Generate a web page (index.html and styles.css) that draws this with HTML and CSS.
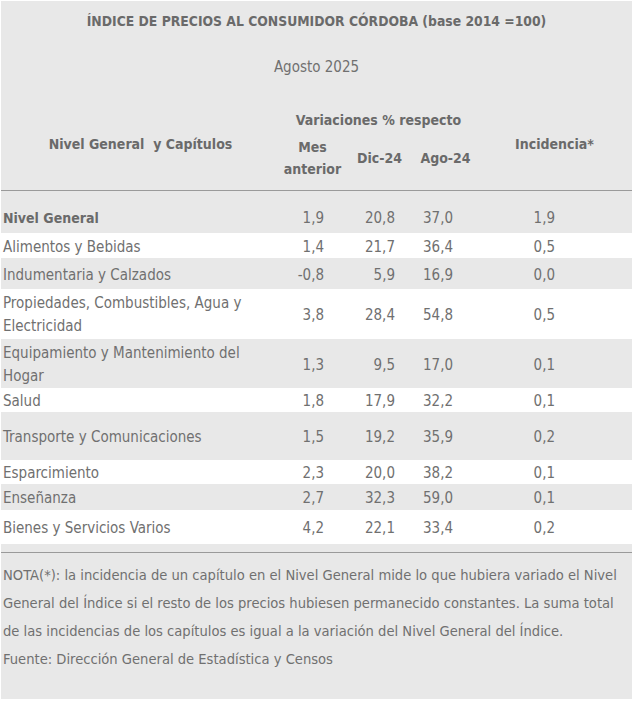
FILE: index.html
```html
<!DOCTYPE html>
<html lang="es">
<head>
<meta charset="utf-8">
<title>IPC Córdoba</title>
<link rel="stylesheet" href="styles.css">
</head>
<body>
<div class="sheet">
  <div class="title">ÍNDICE DE PRECIOS AL CONSUMIDOR CÓRDOBA (base 2014 =100)</div>
  <div class="date">Agosto 2025</div>
  <table class="ipc">
    <colgroup>
      <col class="c1"><col class="c2"><col class="c3"><col class="c4"><col class="c5">
    </colgroup>
    <thead>
      <tr class="h1">
        <th rowspan="2" class="hside">Nivel General&nbsp; y Capítulos</th>
        <th colspan="3">Variaciones % respecto</th>
        <th rowspan="2" class="hside">Incidencia*</th>
      </tr>
      <tr class="h2">
        <th>Mes<br>anterior</th>
        <th>Dic-24</th>
        <th>Ago-24</th>
      </tr>
    </thead>
    <tbody>
      <tr class="r-gen gray"><td class="lbl bold">Nivel General</td><td class="n2">1,9</td><td class="n3">20,8</td><td class="n4">37,0</td><td class="n5">1,9</td></tr>
      <tr class="r-ali white"><td class="lbl">Alimentos y Bebidas</td><td class="n2">1,4</td><td class="n3">21,7</td><td class="n4">36,4</td><td class="n5">0,5</td></tr>
      <tr class="r-ind gray"><td class="lbl">Indumentaria y Calzados</td><td class="n2">-0,8</td><td class="n3">5,9</td><td class="n4">16,9</td><td class="n5">0,0</td></tr>
      <tr class="r-pro white"><td class="lbl wrap">Propiedades, Combustibles, Agua y Electricidad</td><td class="n2">3,8</td><td class="n3">28,4</td><td class="n4">54,8</td><td class="n5">0,5</td></tr>
      <tr class="r-equ gray"><td class="lbl wrap">Equipamiento y Mantenimiento del Hogar</td><td class="n2">1,3</td><td class="n3">9,5</td><td class="n4">17,0</td><td class="n5">0,1</td></tr>
      <tr class="r-sal white"><td class="lbl">Salud</td><td class="n2">1,8</td><td class="n3">17,9</td><td class="n4">32,2</td><td class="n5">0,1</td></tr>
      <tr class="r-tra gray"><td class="lbl">Transporte y Comunicaciones</td><td class="n2">1,5</td><td class="n3">19,2</td><td class="n4">35,9</td><td class="n5">0,2</td></tr>
      <tr class="r-esp white"><td class="lbl">Esparcimiento</td><td class="n2">2,3</td><td class="n3">20,0</td><td class="n4">38,2</td><td class="n5">0,1</td></tr>
      <tr class="r-ens gray"><td class="lbl">Enseñanza</td><td class="n2">2,7</td><td class="n3">32,3</td><td class="n4">59,0</td><td class="n5">0,1</td></tr>
      <tr class="r-bie white"><td class="lbl">Bienes y Servicios Varios</td><td class="n2">4,2</td><td class="n3">22,1</td><td class="n4">33,4</td><td class="n5">0,2</td></tr>
    </tbody>
  </table>
  <div class="note">
    <p>NOTA(*): la incidencia de un capítulo en el Nivel General mide lo que hubiera variado el Nivel General del Índice si el resto de los precios hubiesen permanecido constantes. La suma total de las incidencias de los capítulos es igual a la variación del Nivel General del Índice.</p>
    <p>Fuente: Dirección General de Estadística y Censos</p>
  </div>
</div>
</body>
</html>
```
FILE: styles.css
```css
html, body {
  margin: 0;
  padding: 0;
  background: #ffffff;
}
body {
  font-family: "DejaVu Sans Condensed", "Liberation Sans Narrow", "Liberation Sans", sans-serif;
  font-size: 15px;
  color: #707070;
}
.sheet {
  width: 631px;
  height: 698px;
  margin: 1px 0 0 1px;
  background: #e8e8e8;
  box-sizing: border-box;
}
.title {
  height: 38px;
  line-height: 38px;
  padding-top: 1px;
  box-sizing: border-box;
  text-align: center;
  font-weight: bold;
  font-size: 13.8px;
  color: #6a6a6a;
}
.date {
  height: 66px;
  line-height: 20px;
  padding-top: 18px;
  box-sizing: border-box;
  text-align: center;
}
.ipc {
  width: 631px;
  border-collapse: collapse;
  table-layout: fixed;
}
.c1 { width: 279px; }
.c2 { width: 65px; }
.c3 { width: 69px; }
.c4 { width: 63px; }
.c5 { width: 155px; }
.ipc th {
  font-weight: bold;
  font-size: 14px;
  color: #6a6a6a;
  padding: 2px 0 0 0;
  text-align: center;
  vertical-align: middle;
  line-height: 22px;
}
.ipc thead {
  border-bottom: 1px solid #9a9a9a;
}
.h1 { height: 28px; }
.h2 th { padding-bottom: 9px; height: 46px; }
.ipc th.hside { padding-bottom: 9px; }
.ipc td {
  padding: 3px 0 0 0;
  vertical-align: middle;
  line-height: 20px;
}
.ipc td.wrap { line-height: 23px; }
.lbl { padding-left: 2px !important; }
.bold { font-weight: bold; font-size: 14px; color: #6a6a6a; }
.n2, .n3, .n4, .n5 { text-align: right; }
.n2 { padding-right: 21px !important; }
.n3 { padding-right: 19px !important; }
.n4 { padding-right: 24px !important; }
.n5 { padding-right: 77px !important; }
.gray { background: #e8e8e8; }
.white { background: #ffffff; }
.r-gen { height: 42px; }
.r-gen td { padding-top: 12px !important; }
.r-ali { height: 25px; }
.r-ind { height: 31px; }
.r-pro { height: 50px; }
.r-equ { height: 49px; }
.r-sal { height: 24px; }
.r-tra { height: 48px; }
.r-esp { height: 24px; }
.r-ens { height: 26px; }
.r-bie { height: 34px; }
.note {
  margin-top: 8px;
  border-top: 1px solid #9a9a9a;
  padding: 8px 0 0 2px;
  line-height: 28px;
  font-size: 14.6px;
}
.note p { margin: 0; }
```
